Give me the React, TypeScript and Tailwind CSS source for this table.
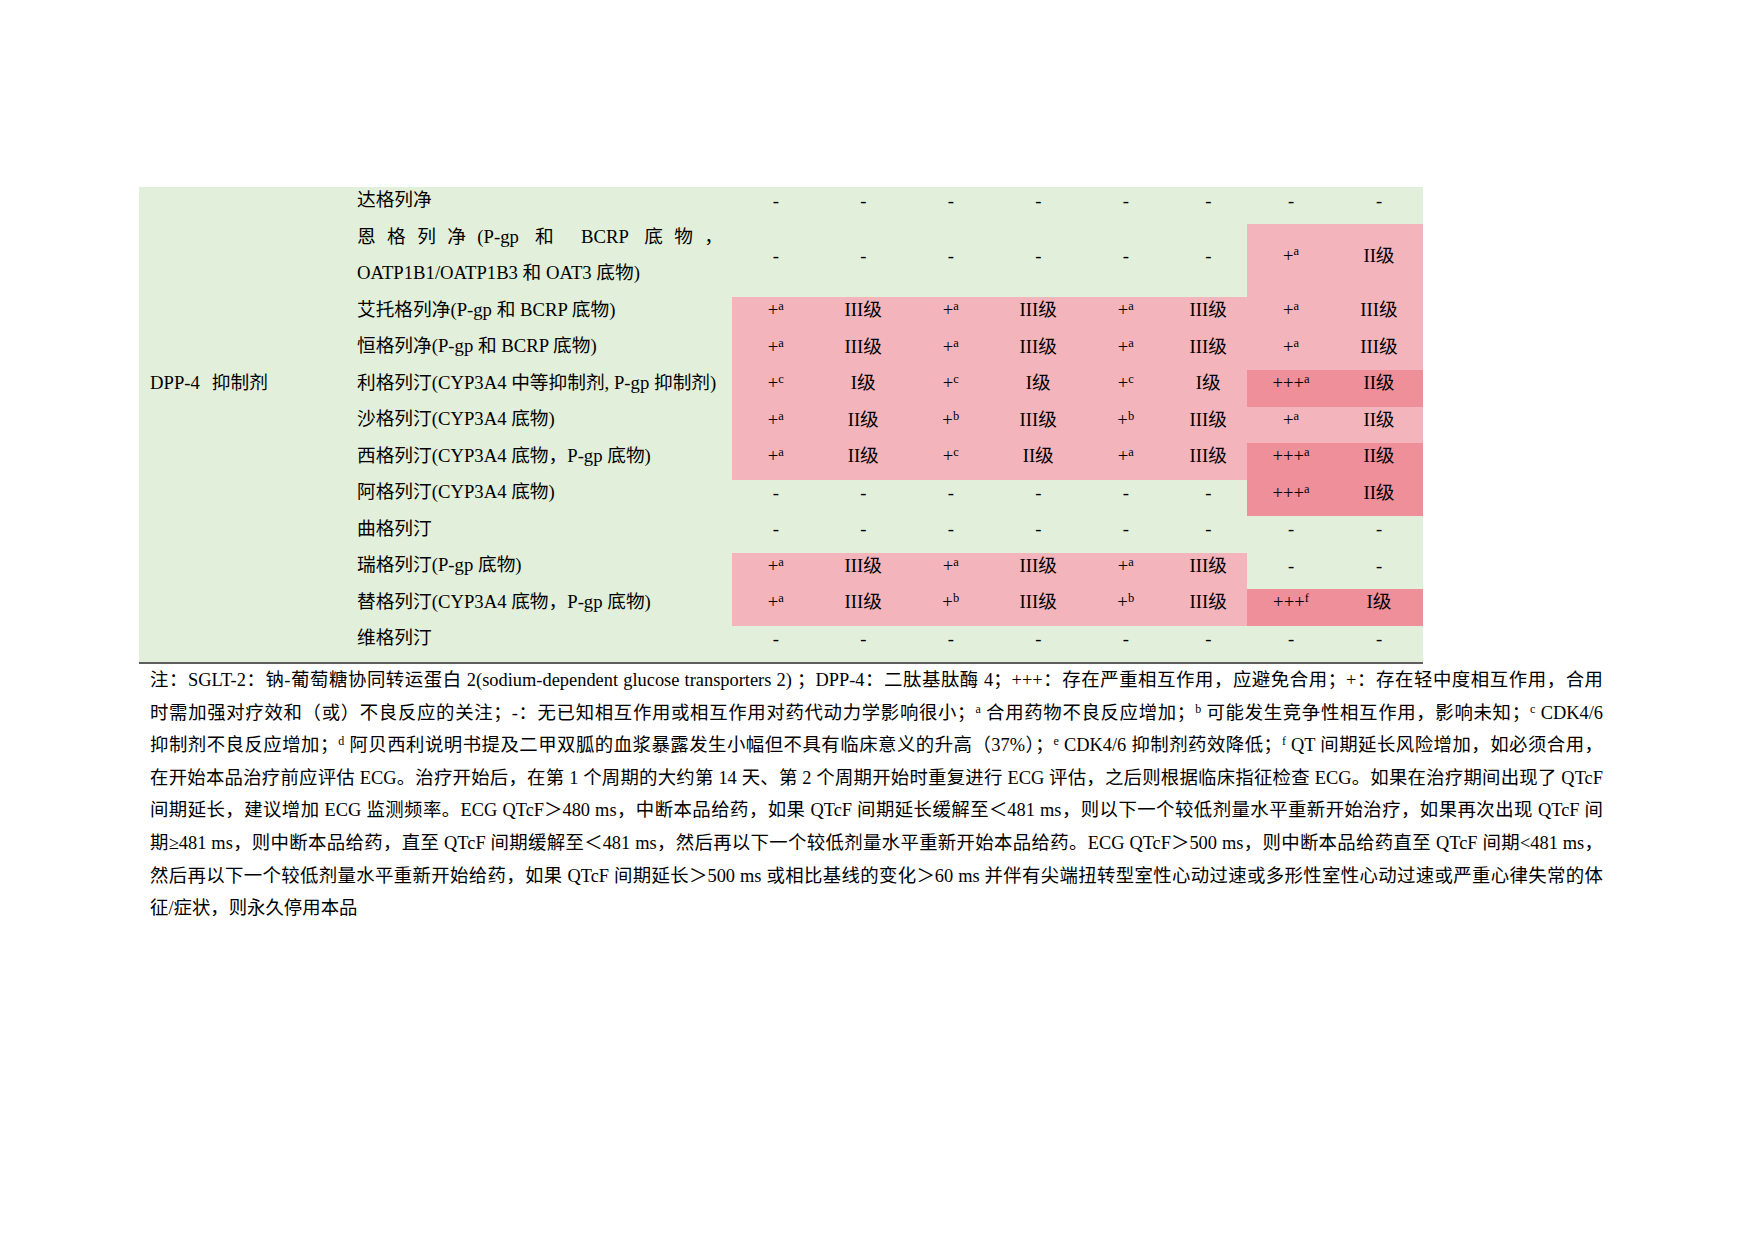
import React from 'react';

type Row = {
  name: string[];
  vals: string[];
  h: string;
};

const rows: Row[] = [
  { name: ['达格列净'], vals: ['-', '-', '-', '-', '-', '-', '-', '-'], h: 'grid-rows-[37px]' },
  {
    name: ['恩格列净(P-gp 和 BCRP 底物，', 'OATP1B1/OATP1B3 和 OAT3 底物)'],
    vals: ['-', '-', '-', '-', '-', '-', '+a', 'II级'],
    h: 'grid-rows-[73px]',
  },
  { name: ['艾托格列净(P-gp 和 BCRP 底物)'], vals: ['+a', 'III级', '+a', 'III级', '+a', 'III级', '+a', 'III级'], h: 'grid-rows-[36.5px]' },
  { name: ['恒格列净(P-gp 和 BCRP 底物)'], vals: ['+a', 'III级', '+a', 'III级', '+a', 'III级', '+a', 'III级'], h: 'grid-rows-[36.5px]' },
  { name: ['利格列汀(CYP3A4 中等抑制剂, P-gp 抑制剂)'], vals: ['+c', 'I级', '+c', 'I级', '+c', 'I级', '+++a', 'II级'], h: 'grid-rows-[36.5px]' },
  { name: ['沙格列汀(CYP3A4 底物)'], vals: ['+a', 'II级', '+b', 'III级', '+b', 'III级', '+a', 'II级'], h: 'grid-rows-[36.5px]' },
  { name: ['西格列汀(CYP3A4 底物，P-gp 底物)'], vals: ['+a', 'II级', '+c', 'II级', '+a', 'III级', '+++a', 'II级'], h: 'grid-rows-[36.5px]' },
  { name: ['阿格列汀(CYP3A4 底物)'], vals: ['-', '-', '-', '-', '-', '-', '+++a', 'II级'], h: 'grid-rows-[36.5px]' },
  { name: ['曲格列汀'], vals: ['-', '-', '-', '-', '-', '-', '-', '-'], h: 'grid-rows-[36.5px]' },
  { name: ['瑞格列汀(P-gp 底物)'], vals: ['+a', 'III级', '+a', 'III级', '+a', 'III级', '-', '-'], h: 'grid-rows-[36.5px]' },
  { name: ['替格列汀(CYP3A4 底物，P-gp 底物)'], vals: ['+a', 'III级', '+b', 'III级', '+b', 'III级', '+++f', 'I级'], h: 'grid-rows-[36.5px]' },
  { name: ['维格列汀'], vals: ['-', '-', '-', '-', '-', '-', '-', '-'], h: 'grid-rows-[36.5px]' },
];

// colour of a pair of columns follows the first value of the pair
const pairBg = (first: string) => {
  if (first === '-') return 'bg-[#e2efda]';
  if (first.startsWith('+++')) return 'bg-[#ee8f9a]';
  return 'bg-[#f4b4bc]';
};

const Value = ({ v }: { v: string }) => {
  const m = v.match(/^(\++)([a-f])$/);
  if (m) {
    return (
      <span>
        {m[1]}
        <sup className="text-[12.5px]">{m[2]}</sup>
      </span>
    );
  }
  return <span>{v}</span>;
};

const noteLines: React.ReactNode[] = [
  <>注：SGLT-2：钠-葡萄糖协同转运蛋白 2(sodium-dependent glucose transporters 2) ；DPP-4：二肽基肽酶 4；+++：存在严重相互作用，应避免合用；+：存在轻中度相互作用，合用</>,
  <>时需加强对疗效和（或）不良反应的关注；-：无已知相互作用或相互作用对药代动力学影响很小；<sup>a</sup> 合用药物不良反应增加；<sup>b</sup> 可能发生竞争性相互作用，影响未知；<sup>c</sup> CDK4/6</>,
  <>抑制剂不良反应增加；<sup>d</sup> 阿贝西利说明书提及二甲双胍的血浆暴露发生小幅但不具有临床意义的升高（37%）；<sup>e</sup> CDK4/6 抑制剂药效降低；<sup>f</sup> QT 间期延长风险增加，如必须合用，</>,
  <>在开始本品治疗前应评估 ECG。治疗开始后，在第 1 个周期的大约第 14 天、第 2 个周期开始时重复进行 ECG 评估，之后则根据临床指征检查 ECG。如果在治疗期间出现了 QTcF</>,
  <>间期延长，建议增加 ECG 监测频率。ECG QTcF＞480 ms，中断本品给药，如果 QTcF 间期延长缓解至＜481 ms，则以下一个较低剂量水平重新开始治疗，如果再次出现 QTcF 间</>,
  <>期≥481 ms，则中断本品给药，直至 QTcF 间期缓解至＜481 ms，然后再以下一个较低剂量水平重新开始本品给药。ECG QTcF＞500 ms，则中断本品给药直至 QTcF 间期&lt;481 ms，</>,
  <>然后再以下一个较低剂量水平重新开始给药，如果 QTcF 间期延长＞500 ms 或相比基线的变化＞60 ms 并伴有尖端扭转型室性心动过速或多形性室性心动过速或严重心律失常的体</>,
];

export default function App() {
  return (
    <div className="w-[1754px] h-[1241px] bg-white pt-[187px] pl-[139px] text-black font-['Liberation_Serif','Noto_Sans_CJK_SC',serif] text-[18.7px]">
      {/* table */}
      <div className="w-[1284px] bg-[#e2efda] border-b-2 border-[#5e5e5e]">
        {rows.map((row, ri) => (
          <div
            key={ri}
            className={`grid grid-cols-[208px_385px_87.5px_87.5px_87.5px_87.5px_87.5px_77.5px_88px_88px] ${row.h}`}
          >
            <div className="flex items-center pl-[11px] pb-[10px] leading-[24px]">
              {ri === 4 && (
                <>
                  <span>DPP-4</span>
                  <span className="ml-[12px]">抑制剂</span>
                </>
              )}
            </div>
            <div className="flex flex-col justify-center pl-[10px] pr-[9px] pb-[11px] leading-[36px]">
              {row.name.length > 1 ? (
                <>
                  <div className="text-justify [text-align-last:justify]">{row.name[0]}</div>
                  <div>{row.name[1]}</div>
                </>
              ) : (
                <div className="whitespace-nowrap leading-[24px]">{row.name[0]}</div>
              )}
            </div>
            {row.vals.map((v, ci) => (
              <div
                key={ci}
                className={`flex items-center justify-center pb-[10px] leading-[24px] ${pairBg(row.vals[ci - (ci % 2)])}`}
              >
                <Value v={v} />
              </div>
            ))}
          </div>
        ))}
      </div>

      {/* notes */}
      <div className="w-[1475px] pl-[11px] pr-[11px] leading-[32.6px] text-[18.4px]">
        {noteLines.map((l, i) => (
          <div key={i} className="text-justify [text-align-last:justify] [&_sup]:text-[12px]">
            {l}
          </div>
        ))}
        <div>征/症状，则永久停用本品</div>
      </div>
    </div>
  );
}
